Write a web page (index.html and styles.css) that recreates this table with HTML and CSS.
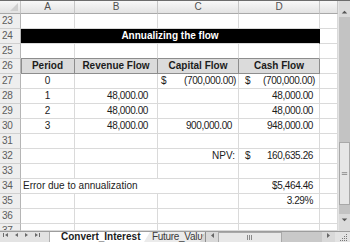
FILE: index.html
```html
<!DOCTYPE html>
<html>
<head>
<meta charset="utf-8">
<link rel="stylesheet" href="styles.css">
</head>
<body>
<div class="app">
  <div class="main">
    <div class="sheet">
      <div class="corner"></div><div class="ch">A</div><div class="ch">B</div><div class="ch">C</div><div class="ch">D</div><div class="ch"></div>

      <div class="rh">23</div><div class="c"></div><div class="c"></div><div class="c"></div><div class="c"></div><div class="c"></div>

      <div class="rh">24</div><div class="c title">Annualizing the flow</div><div class="c"></div>

      <div class="rh">25</div><div class="c ab"></div><div class="c ab"></div><div class="c ab"></div><div class="c ab"></div><div class="c"></div>

      <div class="rh">26</div><div class="c hdr hdr-first">Period</div><div class="c hdr">Revenue Flow</div><div class="c hdr">Capital Flow</div><div class="c hdr">Cash Flow</div><div class="c"></div>

      <div class="rh">27</div><div class="c ctr">0</div><div class="c"></div><div class="c acct acct-c neg"><span>$</span><span>(700,000.00)</span></div><div class="c acct neg"><span>$</span><span>(700,000.00)</span></div><div class="c"></div>

      <div class="rh">28</div><div class="c ctr">1</div><div class="c num pb">48,000.00</div><div class="c"></div><div class="c num">48,000.00</div><div class="c"></div>

      <div class="rh">29</div><div class="c ctr">2</div><div class="c num pb">48,000.00</div><div class="c"></div><div class="c num">48,000.00</div><div class="c"></div>

      <div class="rh">30</div><div class="c ctr">3</div><div class="c num pb">48,000.00</div><div class="c num">900,000.00</div><div class="c num">948,000.00</div><div class="c"></div>

      <div class="rh">31</div><div class="c"></div><div class="c"></div><div class="c"></div><div class="c"></div><div class="c"></div>

      <div class="rh">32</div><div class="c"></div><div class="c"></div><div class="c num npv">NPV:</div><div class="c acct"><span>$</span><span>160,635.26</span></div><div class="c"></div>

      <div class="rh">33</div><div class="c"></div><div class="c"></div><div class="c"></div><div class="c"></div><div class="c"></div>

      <div class="rh">34</div><div class="c span3">Error due to annualization</div><div class="c num">$5,464.46</div><div class="c"></div>

      <div class="rh">35</div><div class="c"></div><div class="c"></div><div class="c"></div><div class="c num">3.29%</div><div class="c"></div>

      <div class="rh">36</div><div class="c"></div><div class="c"></div><div class="c"></div><div class="c"></div><div class="c"></div>

      <div class="rh">37</div><div class="c"></div><div class="c"></div><div class="c"></div><div class="c"></div><div class="c"></div>
    </div>
    <div class="vscroll">
      <div class="vs-btn vs-up">
        <svg width="12" height="16" viewBox="0 0 12 16"><polygon points="3,13 9,13 6,10" fill="#555"/></svg>
      </div>
      <div class="vs-track vs-track1"></div>
      <div class="vs-thumb">
        <svg width="10" height="6" viewBox="0 0 10 6"><path d="M2 1.5H8M2 3.5H8" stroke="#8a8a8a" stroke-width="1"/></svg>
      </div>
      <div class="vs-track vs-track2"></div>
      <div class="vs-btn vs-down">
        <svg width="12" height="17" viewBox="0 0 12 17"><polygon points="3,4 9,4 6,7" fill="#555"/></svg>
      </div>
    </div>
  </div>
  <div class="tabbar">
    <div class="nav">
      <svg width="50" height="10" viewBox="0 0 50 10">
        <rect x="3" y="1" width="1" height="4" fill="#6a6a6a"/>
        <polygon points="8,1 8,5 5,3" fill="#6a6a6a"/>
        <polygon points="18,1 18,5 15,3" fill="#6a6a6a"/>
        <polygon points="25,1 25,5 28,3" fill="#6a6a6a"/>
        <polygon points="35,1 35,5 38,3" fill="#6a6a6a"/>
        <rect x="39" y="1" width="1" height="4" fill="#6a6a6a"/>
      </svg>
    </div>
    <div class="tab tab-active">Convert_Interest</div>
    <div class="tab tab-other">Future_Value</div>
    <div class="hscroll">
      <div class="hs-btn hs-left"><svg width="12" height="10" viewBox="0 0 12 10"><polygon points="8,1 8,6 5,3.5" fill="#666"/></svg></div>
      <div class="hs-thumb"><svg width="8" height="6" viewBox="0 0 8 6"><path d="M1.5 0V5M3.5 0V5M5.5 0V5" stroke="#8a8a8a" stroke-width="1"/></svg></div>
      <div class="hs-track"></div>
      <div class="hs-btn hs-right"><svg width="13" height="10" viewBox="0 0 13 10"><polygon points="5,1 5,6 8,3.5" fill="#666"/></svg></div>
    </div>
    <div class="grip">
      <svg width="15" height="10" viewBox="0 0 15 10">
        <rect x="11" y="2" width="1" height="1" fill="#777"/>
        <rect x="9" y="4" width="1" height="1" fill="#777"/>
        <rect x="11" y="4" width="1" height="1" fill="#777"/>
        <rect x="7" y="6" width="1" height="1" fill="#777"/>
        <rect x="9" y="6" width="1" height="1" fill="#777"/>
        <rect x="11" y="6" width="1" height="1" fill="#777"/>
        <rect x="5" y="8" width="1" height="1" fill="#777"/>
        <rect x="7" y="8" width="1" height="1" fill="#777"/>
        <rect x="9" y="8" width="1" height="1" fill="#777"/>
        <rect x="11" y="8" width="1" height="1" fill="#777"/>
      </svg>
    </div>
  </div>
</div>
</body>
</html>
```

FILE: styles.css
```css
* {
  box-sizing: border-box;
  margin: 0;
  padding: 0;
}

html, body {
  width: 350px;
  height: 242px;
  overflow: hidden;
  background: #fff;
}

body {
  font-family: "Liberation Sans", Arial, sans-serif;
  font-size: 10px;
  color: #1c1c1c;
}

.app {
  display: flex;
  flex-direction: column;
  width: 350px;
  height: 242px;
}

.main {
  display: flex;
  height: 231px;
  border-top: 1px solid #6c6c6c;
}

.sheet {
  width: 338px;
  display: grid;
  grid-template-columns: 21px 54px 83px 81px 81px 18px;
  grid-template-rows: 13px repeat(14, 15px) 7px;
  overflow: hidden;
}

.corner {
  position: relative;
  background: linear-gradient(#f7f7f7, #e2e2e2);
  border-right: 1px solid #c4c4c4;
  border-bottom: 1px solid #a9a9a9;
}

.corner::after {
  content: "";
  position: absolute;
  right: 2px;
  bottom: 2px;
  width: 0;
  height: 0;
  border-left: 8px solid transparent;
  border-bottom: 8px solid #cfcfcf;
}

.ch {
  background: linear-gradient(#f8f8f8, #e3e3e3);
  border-right: 1px solid #c6c6c6;
  border-bottom: 1px solid #a9a9a9;
  text-align: center;
  color: #505050;
  line-height: 12px;
}

.rh {
  background: #eeeeee;
  border-right: 1px solid #b5b5b5;
  border-bottom: 1px solid #d0d0d0;
  color: #5c5c5c;
  padding-left: 2px;
  line-height: 14px;
  letter-spacing: -0.2px;
  overflow: hidden;
}

.c {
  border-right: 1px solid #dadada;
  border-bottom: 1px solid #dadada;
  line-height: 14px;
  white-space: nowrap;
  overflow: hidden;
  padding: 0 2px;
}

.ctr {
  text-align: center;
}

.num {
  text-align: right;
  padding-right: 6px;
  letter-spacing: -0.4px;
}

.num.pb {
  padding-right: 9px;
}

.num.npv {
  padding-right: 3px;
  letter-spacing: 0;
}

.acct {
  display: flex;
  justify-content: space-between;
  padding-left: 6px;
  padding-right: 6px;
  letter-spacing: -0.4px;
}

.acct.acct-c {
  padding-left: 3px;
}

.acct.neg {
  padding-right: 4px;
}

.acct.acct-c.neg {
  padding-right: 2px;
}

.title {
  grid-column: span 4;
  background: #000;
  color: #fff;
  font-weight: bold;
  text-align: center;
  border-right-color: #000;
}

.ab {
  border-bottom-color: #8d8d8d;
}

.hdr {
  background: #dbdbdb;
  font-weight: bold;
  text-align: center;
  border-right-color: #8d8d8d;
  border-bottom-color: #8d8d8d;
}

.hdr-first {
  box-shadow: inset 1px 0 0 #8d8d8d;
}

.span3 {
  grid-column: span 3;
  padding-left: 2px;
}

.vscroll {
  width: 12px;
  display: flex;
  flex-direction: column;
  background: #c3c3c3;
  border-left: 1px solid #e4e4e4;
}

.vs-btn {
  display: flex;
  justify-content: center;
  background: #dadada;
}

.vs-up {
  height: 16px;
}

.vs-down {
  height: 17px;
}

.vs-track1 {
  height: 125px;
}

.vs-track2 {
  height: 9px;
}

.vs-thumb {
  height: 63px;
  background: #e6e6e6;
  border: 1px solid #a8a8a8;
  display: flex;
  align-items: center;
  justify-content: center;
}

.tabbar {
  display: flex;
  height: 11px;
  border-top: 1px solid #9d9d9d;
  background: #d6d6d6;
  overflow: hidden;
}

.nav {
  width: 50px;
  background: #e3e3e3;
  border-right: 1px solid #b0b0b0;
  flex: none;
}

.nav svg {
  display: block;
}

.tab {
  flex: none;
  line-height: 10px;
  white-space: nowrap;
  overflow: hidden;
}

.tab-active {
  width: 100px;
  padding-left: 11px;
  background: #fff;
  font-weight: bold;
  color: #1c1c1c;
  clip-path: polygon(0 0, 100% 0, calc(100% - 6px) 100%, 0 100%);
  position: relative;
  z-index: 1;
}

.tab-other {
  width: 61px;
  margin-left: -6px;
  padding-left: 8px;
  background: #ebebeb;
  color: #3a3a3a;
  letter-spacing: -0.3px;
  clip-path: polygon(0 0, 100% 0, calc(100% - 5px) 100%, 0 100%);
}

.hscroll {
  display: flex;
  width: 130px;
  flex: none;
  background: #c9c9c9;
  border-left: 1px solid #8f8f8f;
}

.hs-btn {
  flex: none;
  background: #d9d9d9;
}

.hs-btn svg {
  display: block;
}

.hs-left {
  width: 12px;
}

.hs-right {
  width: 13px;
}

.hs-thumb {
  width: 64px;
  background: #e8e8e8;
  border: 1px solid #a9a9a9;
  border-bottom: none;
  display: flex;
  justify-content: center;
  padding-top: 2px;
}

.hs-track {
  flex: 1;
}

.grip {
  flex: 1;
  background: #e3e3e3;
}

.grip svg {
  display: block;
}
```
